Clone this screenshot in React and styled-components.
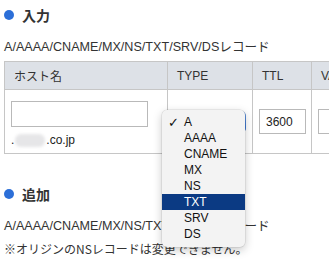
import React from "react";
import styled, { createGlobalStyle } from "styled-components";

const GlobalStyle = createGlobalStyle`
  html, body {
    margin: 0;
    padding: 0;
    background: #ffffff;
    overflow: hidden;
  }
  body {
    font-family: "Liberation Sans", "Noto Sans CJK JP", sans-serif;
    color: #333333;
  }
`;

const recordTypes = ["A", "AAAA", "CNAME", "MX", "NS", "TXT", "SRV", "DS"];

const App = () => {
  return (
    <Page>
      <GlobalStyle />
      <Section>
        <Heading>入力</Heading>
        <Note>A/AAAA/CNAME/MX/NS/TXT/SRV/DSレコード</Note>
        <RecordTable>
          <thead>
            <tr>
              <HeadCell $width={163}>ホスト名</HeadCell>
              <HeadCell $width={85}>TYPE</HeadCell>
              <HeadCell $width={59}>TTL</HeadCell>
              <HeadCell $width={120}>VALUE</HeadCell>
            </tr>
          </thead>
          <tbody>
            <tr>
              <HostCell>
                <HostInput type="text" />
                <Domain>
                  .<Blur />.co.jp
                </Domain>
              </HostCell>
              <TypeCell>
                <SelectBox>
                  <SelectArrow />
                </SelectBox>
                <Menu>
                  {recordTypes.map((t) => (
                    <MenuItem key={t} $active={t === "TXT"}>
                      <Check>{t === "A" ? "✓" : ""}</Check>
                      {t}
                    </MenuItem>
                  ))}
                </Menu>
              </TypeCell>
              <MiddleCell>
                <TtlInput type="text" defaultValue="3600" />
              </MiddleCell>
              <MiddleCell>
                <ValueInput type="text" />
              </MiddleCell>
            </tr>
          </tbody>
        </RecordTable>
      </Section>

      <Section $gap={30}>
        <Heading>追加</Heading>
        <Note>A/AAAA/CNAME/MX/NS/TXT/SRV/DSレコード</Note>
        <Notice>※オリジンのNSレコードは変更できません。</Notice>
        <Notice>※オリジンのNSレコード機能で設定されるA/AAAAレコードは</Notice>
      </Section>
    </Page>
  );
};

const Page = styled.div`
  width: 329px;
  height: 264px;
  overflow: hidden;
  padding: 5px 0 0 4px;
  box-sizing: border-box;
`;

const Section = styled.div`
  display: flex;
  flex-direction: column;
  margin-top: ${(p) => p.$gap || 0}px;
`;

const Heading = styled.h2`
  display: flex;
  align-items: center;
  gap: 8px;
  margin: 0;
  height: 20px;
  font-size: 14px;
  font-weight: 700;
  color: #333333;
  font-family: "Noto Sans CJK JP", sans-serif;
  &::before {
    content: "";
    width: 10px;
    height: 10px;
    border-radius: 50%;
    background: #2c6fd8;
  }
`;

const Note = styled.p`
  margin: 14px 0 0 0;
  font-size: 12.6px;
  line-height: 16px;
  white-space: nowrap;
`;

const Notice = styled.p`
  margin: 7px 0 0 0;
  font-size: 12px;
  line-height: 16px;
  white-space: nowrap;
  color: #333333;
  font-family: "Noto Sans CJK JP", sans-serif;
`;

const RecordTable = styled.table`
  border-collapse: collapse;
  margin-top: 6px;
  table-layout: fixed;
  width: 427px;
`;

const HeadCell = styled.th`
  width: ${(p) => p.$width}px;
  height: 28px;
  padding: 0 0 0 9px;
  text-align: left;
  font-size: 12px;
  font-weight: 400;
  color: #333333;
  background: #dde1e7;
  border: 1px solid #c6c6c6;
  font-family: "Liberation Sans", "Noto Sans CJK JP", sans-serif;
  box-sizing: border-box;
`;

const HostCell = styled.td`
  padding: 11px 0 5px 6px;
  border: 1px solid #c6c6c6;
  vertical-align: top;
`;

const MiddleCell = styled.td`
  padding: 0 0 0 6px;
  border: 1px solid #c6c6c6;
  vertical-align: middle;
`;

const TypeCell = styled(MiddleCell)`
  position: relative;
`;

const inputBase = `
  display: block;
  box-sizing: border-box;
  border: 1px solid #b9b9b9;
  background: #ffffff;
  font-family: "Liberation Sans", sans-serif;
  font-size: 12px;
  color: #222222;
  outline: none;
`;

const HostInput = styled.input`
  ${inputBase}
  width: 137px;
  height: 26px;
`;

const TtlInput = styled.input`
  ${inputBase}
  width: 47px;
  height: 25px;
  padding: 0 0 0 6px;
`;

const ValueInput = styled.input`
  ${inputBase}
  width: 100px;
  height: 25px;
`;

const Domain = styled.div`
  display: flex;
  align-items: center;
  margin-top: 5px;
  font-size: 12px;
  line-height: 16px;
  color: #222222;
`;

const Blur = styled.span`
  display: inline-block;
  width: 30px;
  height: 13px;
  margin: 0 1px;
  border-radius: 6px;
  background: #e6e6e8;
  filter: blur(1.5px);
`;

const SelectBox = styled.div`
  position: relative;
  width: 72px;
  height: 22px;
  border-radius: 5px;
  border: 1px solid #c4c4c4;
  background: #ffffff;
  box-sizing: border-box;
`;

const SelectArrow = styled.span`
  position: absolute;
  right: -1px;
  top: -1px;
  width: 16px;
  height: 22px;
  border-radius: 0 5px 5px 0;
  background: linear-gradient(#6c9de4, #2f6ed3);
`;

const Menu = styled.ul`
  position: absolute;
  left: -6px;
  top: 20px;
  z-index: 2;
  width: 83px;
  margin: 0;
  padding: 4px 0 5px 0;
  list-style: none;
  background: #f3f3f3;
  border-radius: 5px;
  box-shadow: 0 0 0 0.5px rgba(0, 0, 0, 0.12), 0 3px 10px rgba(0, 0, 0, 0.22);
`;

const MenuItem = styled.li`
  display: flex;
  align-items: center;
  height: 16px;
  font-size: 12px;
  font-family: "Liberation Sans", sans-serif;
  color: ${(p) => (p.$active ? "#ffffff" : "#111111")};
  background: ${(p) => (p.$active ? "#0b3a83" : "transparent")};
`;

const Check = styled.span`
  display: inline-block;
  width: 22px;
  padding-left: 6px;
  box-sizing: border-box;
  font-size: 13px;
  font-weight: 700;
  font-family: "DejaVu Sans", sans-serif;
  font-style: italic;
`;

export default App;
